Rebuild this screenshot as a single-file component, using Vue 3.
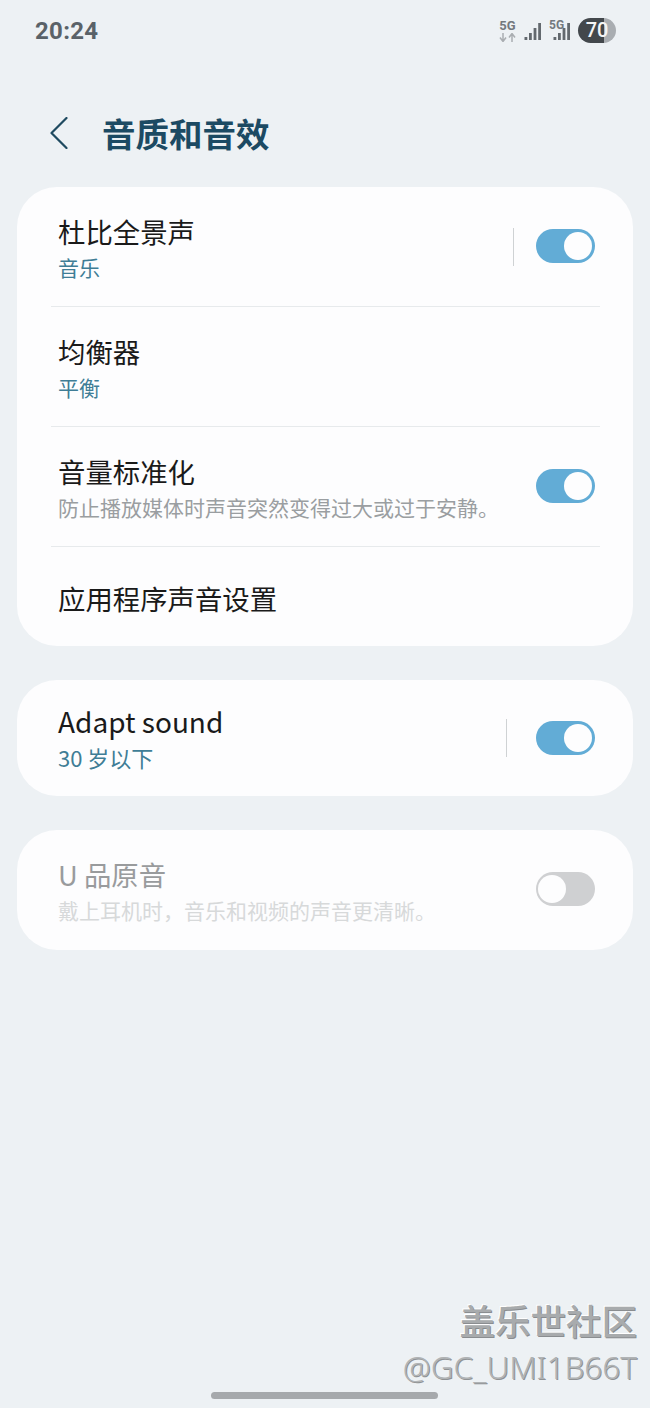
<template>
  <div class="page">
    <div class="status-bar">
      <span class="time">20:24</span>
      <div class="status-icons">
        <div class="net-up">
          <span class="net-label">5G</span>
          <svg width="17" height="9" viewBox="0 0 17 9">
            <path d="M4 0v8M1 4.5l3 4 3-4" fill="none" stroke="#a9adb1" stroke-width="1.5" />
            <path d="M13 9v-8M10 4.5l3-4 3 4" fill="none" stroke="#a9adb1" stroke-width="1.5" />
          </svg>
        </div>
        <svg class="bars" width="18" height="18" viewBox="0 0 18 18">
          <rect v-for="b in signalBars" :key="b.x" :x="b.x" :y="18 - b.h" width="2.8" :height="b.h" fill="#63696e" />
        </svg>
        <div class="sim-two">
          <span class="net-label small">5G</span>
          <svg class="bars" width="18" height="18" viewBox="0 0 18 18">
            <rect v-for="b in signalBars" :key="b.x" :x="b.x" :y="18 - b.h" width="2.8" :height="b.h" fill="#63696e" />
          </svg>
        </div>
        <div class="battery"><span>70</span></div>
      </div>
    </div>

    <div class="header">
      <svg class="back" width="18" height="32" viewBox="0 0 18 32">
        <path d="M16.5 1 L1.5 16 L16.5 31" fill="none" stroke="#1f4a60" stroke-width="2.2" stroke-linecap="round" stroke-linejoin="round" />
      </svg>
      <h1 class="title">音质和音效</h1>
    </div>

    <div class="card">
      <div class="row">
        <div class="text">
          <div class="name">杜比全景声</div>
          <div class="sub accent">音乐</div>
        </div>
        <div class="sep"></div>
        <div class="switch on"><i></i></div>
      </div>
      <div class="row">
        <div class="text">
          <div class="name">均衡器</div>
          <div class="sub accent">平衡</div>
        </div>
      </div>
      <div class="row">
        <div class="text">
          <div class="name">音量标准化</div>
          <div class="sub">防止播放媒体时声音突然变得过大或过于安静。</div>
        </div>
        <div class="switch on"><i></i></div>
      </div>
      <div class="row last">
        <div class="text">
          <div class="name">应用程序声音设置</div>
        </div>
      </div>
    </div>

    <div class="card">
      <div class="row adapt">
        <div class="text">
          <div class="name">Adapt sound</div>
          <div class="sub accent">30 岁以下</div>
        </div>
        <div class="sep wide"></div>
        <div class="switch on"><i></i></div>
      </div>
    </div>

    <div class="card disabled">
      <div class="row uhq">
        <div class="text">
          <div class="name">U 品原音</div>
          <div class="sub">戴上耳机时，音乐和视频的声音更清晰。</div>
        </div>
        <div class="switch"><i></i></div>
      </div>
    </div>

    <div class="watermark">
      <div class="wm-top">盖乐世社区</div>
      <div class="wm-user">@GC_UMI1B66T</div>
    </div>
    <div class="home-bar"></div>
  </div>
</template>

<script setup>
const signalBars = [
  { x: 0.5, h: 3 },
  { x: 5, h: 7 },
  { x: 9.6, h: 12 },
  { x: 14.2, h: 17 }
]
</script>

<style>
html, body {
  margin: 0;
  background: #edf1f4;
}
</style>

<style scoped>
.page {
  position: relative;
  box-sizing: border-box;
  height: 1408px;
  padding: 0 17px;
  overflow: hidden;
  background: #edf1f4;
  font-family: "Noto Sans CJK SC", "Noto Sans", sans-serif;
}

.status-bar {
  display: flex;
  align-items: center;
  justify-content: space-between;
  height: 60px;
  padding: 0 17px 0 18px;
}

.time {
  margin-top: 2px;
  font-family: Roboto, sans-serif;
  font-size: 24px;
  font-weight: 700;
  color: #5a6268;
  letter-spacing: 0.3px;
}

.status-icons {
  display: flex;
  align-items: center;
  gap: 7px;
}

.net-up {
  display: flex;
  flex-direction: column;
  align-items: center;
  gap: 2px;
  width: 17px;
  margin: 1px 1px 0 0;
}

.net-label {
  font-family: Roboto, sans-serif;
  font-size: 13px;
  font-weight: 700;
  line-height: 11px;
  color: #73797e;
}

.bars {
  display: block;
  margin-top: 2px;
}

.sim-two {
  position: relative;
  width: 22px;
  height: 24px;
}

.sim-two .bars {
  position: absolute;
  right: 0;
  top: 4px;
  margin: 0;
}

.net-label.small {
  position: absolute;
  left: 0;
  top: 2px;
  font-size: 12px;
}

.battery {
  width: 38px;
  height: 25px;
  border-radius: 13px;
  background: linear-gradient(to right, #43484c 68%, #a9adb1 68%);
  color: #f4f5f5;
  font-family: Roboto, sans-serif;
  font-size: 20px;
  font-weight: 500;
  line-height: 25px;
  text-align: center;
}

.header {
  display: flex;
  align-items: center;
  height: 127px;
  padding-top: 18px;
  box-sizing: border-box;
  padding-left: 33px;
}

.back {
  flex: none;
  margin-right: 34px;
}

.title {
  margin: 0;
  font-size: 33.5px;
  font-weight: 700;
  color: #1c4a63;
  line-height: 44px;
}

.card {
  background: #fdfdfe;
  border-radius: 40px;
  margin-bottom: 34px;
}

.row {
  position: relative;
  display: flex;
  align-items: center;
  height: 120px;
  padding: 0 38px 0 41px;
  box-sizing: border-box;
}

.row::after {
  content: "";
  position: absolute;
  left: 34px;
  right: 33px;
  bottom: 0;
  height: 1px;
  background: #e7eaec;
}

.row.last {
  height: 99px;
  padding-top: 5px;
}

.row.adapt {
  height: 116px;
}

.row.uhq {
  height: 120px;
}

.row.last::after,
.row.adapt::after,
.row.uhq::after {
  display: none;
}

.text {
  flex: 1;
  min-width: 0;
  margin-bottom: 2px;
}

.name {
  font-size: 27.4px;
  line-height: 38px;
  color: #1a1a1a;
}

.adapt .name {
  font-size: 28px;
}

.adapt .text {
  margin-bottom: 4px;
}

.adapt .switch {
  margin-bottom: 0;
}

.sub {
  font-size: 21px;
  line-height: 28px;
  margin-top: 3px;
  color: #9a9ea1;
}

.sub.accent {
  color: #3f7d96;
}

.adapt .sub {
  font-size: 22px;
}

.sep {
  width: 1px;
  height: 38px;
  background: #cfd2d4;
  margin-right: 22px;
}

.sep.wide {
  margin-right: 29px;
}

.switch {
  position: relative;
  flex: none;
  width: 59px;
  height: 34px;
  margin-bottom: 2px;
  border-radius: 17px;
  background: #cfd0d2;
}

.switch i {
  position: absolute;
  top: 3px;
  left: 2px;
  width: 28px;
  height: 28px;
  border-radius: 50%;
  background: #fdfdfe;
}

.switch.on {
  background: #62acd6;
}

.switch.on i {
  left: 28px;
}

.disabled .name {
  color: #999b9d;
}

.disabled .sub {
  color: #d7d9da;
}

.watermark {
  position: absolute;
  right: 13px;
  bottom: 19px;
  text-align: right;
}

.wm-top {
  margin-bottom: 5px;
  font-size: 35.5px;
  font-weight: 500;
  line-height: 40px;
  color: #a8abad;
  text-shadow: 1px 1px 0 #8a8d90, -1px -1px 0 #fff;
}

.wm-user {
  font-family: "Noto Sans", sans-serif;
  font-size: 31.5px;
  font-weight: 300;
  line-height: 44px;
  color: #b0b3b5;
  text-shadow: 1px 1px 0 #8f9294;
}

.home-bar {
  position: absolute;
  left: 211px;
  bottom: 9px;
  width: 227px;
  height: 7px;
  border-radius: 4px;
  background: #a6a9ac;
}
</style>
